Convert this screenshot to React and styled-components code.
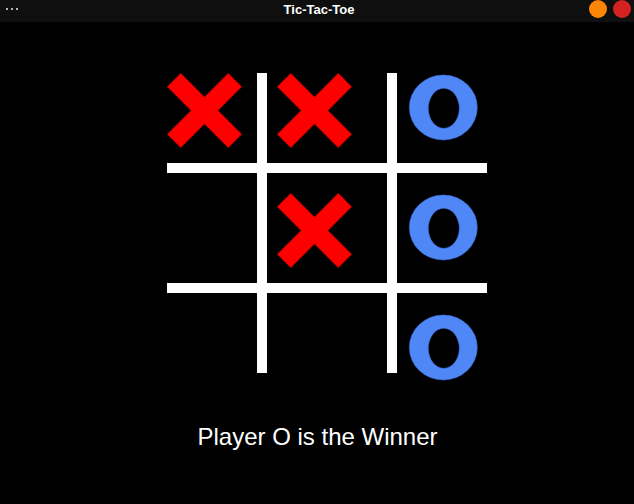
import React from "react";
import styled, { createGlobalStyle } from "styled-components";

const Global = createGlobalStyle`
  html, body { margin: 0; padding: 0; background: #000; }
  #root { width: 634px; height: 504px; }
`;

const Window = styled.div`
  width: 634px;
  height: 504px;
  background: #000;
  display: flex;
  flex-direction: column;
  overflow: hidden;
`;

const TitleBar = styled.div`
  height: 22px;
  background: #0f0f0f;
  display: grid;
  grid-template-columns: 1fr auto 1fr;
  align-items: center;
  padding: 0 3px 0 6px;
`;

const Dots = styled.div`
  display: flex;
  gap: 3px;
  align-items: center;
  padding-bottom: 6px;
`;

const Dot = styled.span`
  width: 2px;
  height: 2px;
  background: #b4b4b4;
`;

const Title = styled.div`
  font-family: "Liberation Sans", Arial, sans-serif;
  font-weight: bold;
  font-size: 13px;
  line-height: 15px;
  color: #fff;
  padding-bottom: 5px;
  padding-left: 1px;
`;

const Controls = styled.div`
  display: flex;
  justify-content: flex-end;
  gap: 6px;
  padding-bottom: 6px;
`;

const Circle = styled.span`
  width: 18px;
  height: 18px;
  border-radius: 50%;
  background: ${(p) => p.$color};
`;

const Board = styled.div`
  display: grid;
  grid-template-columns: 90px 10px 120px 10px 90px;
  grid-template-rows: 90px 10px 110px 10px 80px;
  width: 320px;
  margin: 51px 0 0 167px;
`;

const VLine = styled.div`
  grid-row: 1 / 6;
  grid-column: ${(p) => p.$col};
  background: #fff;
`;

const HLine = styled.div`
  grid-column: 1 / 6;
  grid-row: ${(p) => p.$row};
  background: #fff;
`;

const Cell = styled.div`
  grid-row: ${(p) => p.$row};
  grid-column: ${(p) => p.$col};
  padding: ${(p) => p.$dy}px 0 0 ${(p) => p.$dx}px;
  display: flex;
  align-items: flex-start;
  justify-content: flex-start;
  z-index: 1;
`;

const Status = styled.div`
  margin-top: 52px;
  font-family: "Liberation Sans", Arial, sans-serif;
  font-size: 24px;
  line-height: 24px;
  color: #fff;
  text-align: center;
  padding-left: 1px;
`;

const d = 13.5;
const xPts = [
  [0, d], [d, 0], [37.5, 37.5 - d], [75 - d, 0], [75, d], [37.5 + d, 37.5],
  [75, 75 - d], [75 - d, 75], [37.5, 37.5 + d], [d, 75], [0, 75 - d], [37.5 - d, 37.5],
].map(([x, y]) => `${x},${y}`).join(" ");

const XMark = () => (
  <svg width="75" height="75" viewBox="-0.5 -0.5 76 76">
    <polygon points={xPts} fill="#ff0000" stroke="#c80000" strokeWidth="1" strokeLinejoin="miter" />
  </svg>
);

const OMark = () => (
  <svg width="75" height="75" viewBox="0 0 75 75" style={{ overflow: "visible" }}>
    <path
      fillRule="evenodd"
      fill="#5087f6"
      stroke="#3d6fd6"
      strokeWidth="0.6"
      d="M 4.3 34.5 A 34 32.5 0 1 0 72.3 34.5 A 34 32.5 0 1 0 4.3 34.5 Z M 23.3 35.3 A 15.5 20 0 1 0 54.3 35.3 A 15.5 20 0 1 0 23.3 35.3 Z"
    />
  </svg>
);

const board = [
  ["X", "X", "O"],
  ["", "X", "O"],
  ["", "", "O"],
];
const rowStarts = [1, 3, 5];
const colStarts = [1, 3, 5];
const rowOffsets = [0, 20, 20];
const colOffsets = [0, 10, 8];

export default function App() {
  return (
    <>
      <Global />
      <Window>
        <TitleBar>
          <Dots>
            <Dot />
            <Dot />
            <Dot />
          </Dots>
          <Title>Tic-Tac-Toe</Title>
          <Controls>
            <Circle $color="#fb8507" />
            <Circle $color="#d42222" />
          </Controls>
        </TitleBar>
        <Board>
          <VLine $col="2 / 3" />
          <VLine $col="4 / 5" />
          <HLine $row="2 / 3" />
          <HLine $row="4 / 5" />
          {board.map((row, r) =>
            row.map((v, c) =>
              v ? (
                <Cell
                  key={`${r}-${c}`}
                  $row={rowStarts[r]}
                  $col={colStarts[c]}
                  $dy={rowOffsets[r]}
                  $dx={colOffsets[c]}
                >
                  {v === "X" ? <XMark /> : <OMark />}
                </Cell>
              ) : null
            )
          )}
        </Board>
        <Status>Player O is the Winner</Status>
      </Window>
    </>
  );
}
